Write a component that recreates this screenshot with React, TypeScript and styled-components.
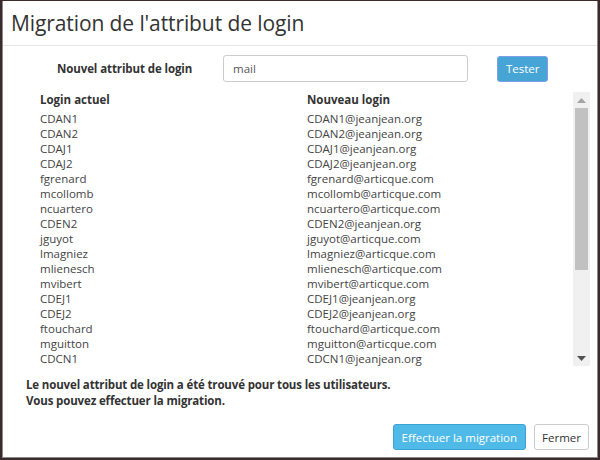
import React from "react";
import styled, { createGlobalStyle } from "styled-components";

const GlobalStyle = createGlobalStyle`
  html, body {
    margin: 0;
    padding: 0;
    background: #3a2a2a;
  }
  body {
    font-family: "Open Sans", "Noto Sans", sans-serif;
    color: #333;
  }
`;

const Modal = styled.div`
  box-sizing: border-box;
  margin: 1px 2px 0 2px;
  width: 596px;
  height: 457px;
  background: #fff;
  border: 1px solid #8a8a8a;
  border-top: none;
  display: flex;
  flex-direction: column;
`;

const Header = styled.div`
  height: 44px;
  border-bottom: 1px solid #e5e5e5;
  display: flex;
  align-items: center;
  padding-left: 8px;
`;

const Title = styled.h4`
  margin: 0;
  font-size: 21px;
  font-weight: 400;
  color: #333;
  letter-spacing: -0.1px;
`;

const Body = styled.div`
  padding: 9px 7px 0 23px;
  display: flex;
  flex-direction: column;
`;

const FormRow = styled.div`
  display: grid;
  grid-template-columns: 168px 245px 51px;
  column-gap: 29px;
  align-items: center;
  height: 26px;
`;

const Label = styled.label`
  font-size: 11.5px;
  font-weight: 700;
  padding-left: 31px;
  white-space: nowrap;
  letter-spacing: -0.1px;
`;

const Input = styled.input`
  box-sizing: border-box;
  height: 27px;
  width: 100%;
  border: 1px solid #ccc;
  border-radius: 3px;
  padding: 0 9px;
  font-family: inherit;
  font-size: 11.5px;
  color: #555;
  outline: none;
`;

const Button = styled.button<{ $variant?: "primary" | "focus" | "default" }>`
  box-sizing: border-box;
  height: 26px;
  border-radius: 3px;
  font-family: inherit;
  font-size: 11.5px;
  padding: 0 ${(p) => (p.$variant === "default" ? "7px" : "8px")};
  cursor: pointer;
  white-space: nowrap;
  background: ${(p) =>
    p.$variant === "default" ? "#fff" : p.$variant === "focus" ? "#46a5d4" : "#4fbae8"};
  color: ${(p) => (p.$variant === "default" ? "#333" : "#fff")};
  border: 1px solid
    ${(p) =>
      p.$variant === "default" ? "#ccc" : p.$variant === "focus" ? "#7e9ee6" : "#3aa3d6"};
`;

const ListPanel = styled.div`
  margin-top: 11px;
  height: 274px;
  display: flex;
`;

const Table = styled.div`
  flex: 1;
  overflow: hidden;
  padding-left: 14px;
  font-size: 11.5px;
`;

const Row = styled.div<{ $head?: boolean }>`
  display: grid;
  grid-template-columns: 267px 1fr;
  line-height: 15px;
  height: ${(p) => (p.$head ? "19px" : "15px")};
  font-weight: ${(p) => (p.$head ? 700 : 400)};
  color: ${(p) => (p.$head ? "#333" : "#444")};
`;

const ScrollTrack = styled.div`
  width: 17px;
  background: #f0f0f0;
  display: flex;
  flex-direction: column;
  align-items: center;
`;

const ScrollArrow = styled.div`
  height: 16px;
  display: flex;
  align-items: center;
  justify-content: center;
`;

const ScrollThumb = styled.div`
  width: 13px;
  height: 162px;
  background: #c1c1c1;
`;

const ScrollFill = styled.div`
  flex: 1;
`;

const Message = styled.div`
  margin-top: 11px;
  font-size: 11.5px;
  font-weight: 700;
  line-height: 16px;
  letter-spacing: -0.15px;
`;

const Footer = styled.div`
  margin-top: auto;
  padding: 0 8px 7px 0;
  display: flex;
  justify-content: flex-end;
  gap: 8px;
`;

const rows: [string, string][] = [
  ["CDAN1", "CDAN1@jeanjean.org"],
  ["CDAN2", "CDAN2@jeanjean.org"],
  ["CDAJ1", "CDAJ1@jeanjean.org"],
  ["CDAJ2", "CDAJ2@jeanjean.org"],
  ["fgrenard", "fgrenard@articque.com"],
  ["mcollomb", "mcollomb@articque.com"],
  ["ncuartero", "ncuartero@articque.com"],
  ["CDEN2", "CDEN2@jeanjean.org"],
  ["jguyot", "jguyot@articque.com"],
  ["lmagniez", "lmagniez@articque.com"],
  ["mlienesch", "mlienesch@articque.com"],
  ["mvibert", "mvibert@articque.com"],
  ["CDEJ1", "CDEJ1@jeanjean.org"],
  ["CDEJ2", "CDEJ2@jeanjean.org"],
  ["ftouchard", "ftouchard@articque.com"],
  ["mguitton", "mguitton@articque.com"],
  ["CDCN1", "CDCN1@jeanjean.org"],
];

const Arrow = ({ up }: { up?: boolean }) => (
  <svg width="9" height="5" viewBox="0 0 9 5">
    <path d={up ? "M0 5 L4.5 0 L9 5 Z" : "M0 0 L4.5 5 L9 0 Z"} fill={up ? "#a3a3a3" : "#505050"} />
  </svg>
);

export default function App() {
  return (
    <>
      <GlobalStyle />
      <Modal>
        <Header>
          <Title>Migration de l'attribut de login</Title>
        </Header>
        <Body>
          <FormRow>
            <Label>Nouvel attribut de login</Label>
            <Input defaultValue="mail" />
            <Button $variant="focus">Tester</Button>
          </FormRow>
          <ListPanel>
            <Table>
              <Row $head>
                <span>Login actuel</span>
                <span>Nouveau login</span>
              </Row>
              {rows.map(([a, b]) => (
                <Row key={a}>
                  <span>{a}</span>
                  <span>{b}</span>
                </Row>
              ))}
            </Table>
            <ScrollTrack>
              <ScrollArrow>
                <Arrow up />
              </ScrollArrow>
              <ScrollThumb />
              <ScrollFill />
              <ScrollArrow>
                <Arrow />
              </ScrollArrow>
            </ScrollTrack>
          </ListPanel>
          <Message>
            Le nouvel attribut de login a été trouvé pour tous les utilisateurs.
            <br />
            Vous pouvez effectuer la migration.
          </Message>
        </Body>
        <Footer>
          <Button>Effectuer la migration</Button>
          <Button $variant="default">Fermer</Button>
        </Footer>
      </Modal>
    </>
  );
}
